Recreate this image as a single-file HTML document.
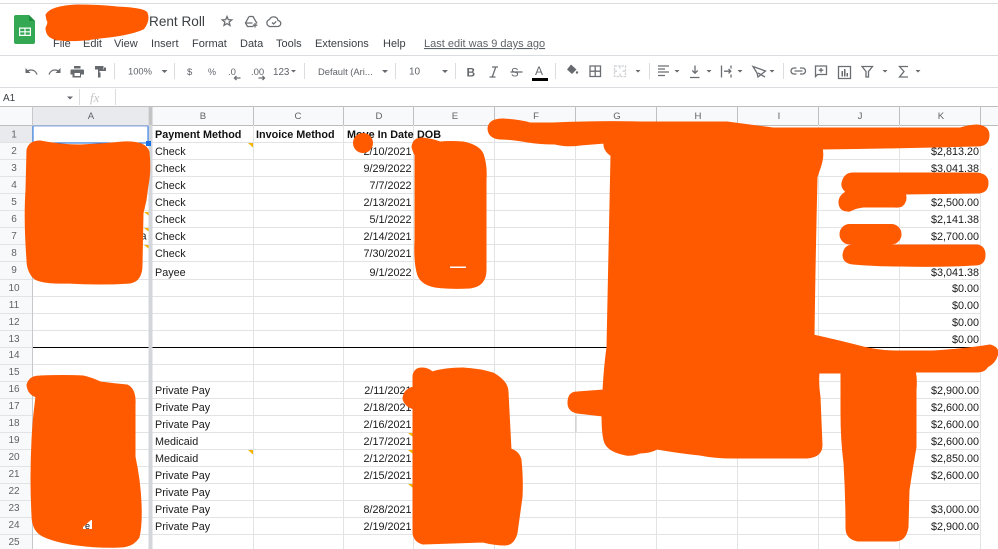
<!DOCTYPE html>
<html><head><meta charset="utf-8"><title>Rent Roll</title>
<style>
html,body{margin:0;padding:0;background:#fff;width:998px;height:549px;overflow:hidden}
svg{display:block;font-family:"Liberation Sans",Arial,sans-serif;filter:blur(.3px)}
.m{font-size:11px;fill:#3c4043}
.rn{font-size:10px;fill:#5f6368;text-anchor:middle}
.ch{font-size:9.6px;fill:#5f6368;text-anchor:middle}
.c{font-size:10.8px;fill:#1a1a1a}
.h{font-size:10.8px;font-weight:bold;fill:#111}
.r{font-size:10.8px;fill:#1a1a1a;text-anchor:end}
.t{font-size:10px;fill:#5f6368}
.i{fill:none;stroke:#6a6e72;stroke-width:1.3}
.f{fill:#666a6e;stroke:none}
.o{fill:#ff5a00;stroke:#ff5a00;stroke-width:3;stroke-linejoin:round}
</style></head><body>
<svg width="998" height="549" viewBox="0 0 998 549" xmlns="http://www.w3.org/2000/svg">
<rect width="998" height="549" fill="#fff"/>
<path d="M0 3.500H998M0 55.500H998M0 87.500H998" stroke="#dadce0" fill="none"/>

<!-- logo -->
<path d="M16 15H29L35 21V42Q35 44 33 44H16Q14 44 14 42V17Q14 15 16 15Z" fill="#34a853"/>
<path d="M29 15L35 21H29Z" fill="#1e8e3e"/>
<path d="M19 27.500H31V36H19Z M20.200 28.700V31.200H24.400V28.700Z M25.600 28.700V31.200H29.800V28.700Z M20.200 32.400V34.800H24.400V32.400Z M25.600 32.400V34.800H29.800V32.400Z" fill="#fff" fill-rule="evenodd"/>

<text x="149" y="26" font-size="13.600" fill="#3c4043">Rent Roll</text>
<path d="M227 16.500l1.300 3.100 3.500.3-2.700 2.200.9 3.300-3-1.800-3 1.800.9-3.300-2.700-2.200 3.500-.3z" class="i" stroke-width="1.100"/>
<path d="M249 16.500h4l4 7M249 16.500l-3.500 6.500 2 3.500h6M245.500 23h7" class="i" stroke-width="1.100"/>
<path d="M255 23v4.500M252.800 25.200h4.500" class="i" stroke-width="1.100"/>
<path d="M271.500 26.500h6a3 3 0 0 0 .5-6 4.500 4.500 0 0 0-8.500-1 3.600 3.600 0 0 0 2 7z" class="i" stroke-width="1.100"/>
<path d="M272 22.500l1.600 1.500 2.600-2.600" class="i" stroke-width="1"/>

<text class="m" x="53" y="47">File</text>
<text class="m" x="83" y="47">Edit</text>
<text class="m" x="114" y="47">View</text>
<text class="m" x="151" y="47">Insert</text>
<text class="m" x="192" y="47">Format</text>
<text class="m" x="240" y="47">Data</text>
<text class="m" x="276" y="47">Tools</text>
<text class="m" x="315" y="47">Extensions</text>
<text class="m" x="383" y="47">Help</text>
<text x="424" y="47" font-size="11" fill="#5f6368" text-decoration="underline">Last edit was 9 days ago</text>

<!-- toolbar -->
<path d="M114.500 63V79M174.500 63V79M304.500 63V79M395.500 63V79M455.500 63V79M555.500 63V79M649.500 63V79M783.500 63V79" stroke="#dadce0" fill="none"/>
<path d="M37 74.500c-1-3-3.500-4.500-6-4.500-1.500 0-3 .5-4 1.500" class="i"/><path d="M25.500 68v5h5z" class="f"/>
<path d="M49 74.500c1-3 3.500-4.500 6-4.500 1.500 0 3 .5 4 1.500" class="i"/><path d="M60.500 68v5h-5z" class="f"/>
<path d="M74 66h6.500v2.500H74z M71.500 69.500h11.500q1 0 1 1v4h-3v3h-8.500v-3h-2v-4q0-1 1-1z" class="f"/><rect x="74.500" y="73" width="5.500" height="3" fill="#fff"/>
<path d="M95 66h8.500v3.500H95z M104 67.500h2v3.500h-6.500v1.500h-1.500v-3h6z M98 72.500h2.500v5H98z" class="f"/>
<text class="t" x="128" y="74.500" font-size="9.400" style="font-size:9.400px">100%</text>
<path d="M161.500 70h6l-3 3zM291 70h5l-2.500 2.500zM382 70h6l-3 3zM442 70h6l-3 3zM635.500 70h5l-2.500 2.500zM674.500 70h5l-2.500 2.500zM706.500 70h5l-2.500 2.500zM737.500 70h5l-2.500 2.500zM769.500 70h5l-2.500 2.500zM882.500 70h5l-2.500 2.500zM915.500 70h5l-2.500 2.500z" class="f"/>
<text class="t" x="187" y="75" style="font-size:9.500px">$</text>
<text class="t" x="208" y="75" style="font-size:9px">%</text>
<text class="t" x="228" y="75" style="font-size:9.500px">.0</text>
<path d="M234.500 78h6M236.500 76l-2 2 2 2" class="i" stroke-width="1"/>
<text class="t" x="251" y="75" style="font-size:9.500px">.00</text>
<path d="M258.500 78h6M262.500 76l2 2-2 2" class="i" stroke-width="1"/>
<text class="t" x="273" y="75" style="font-size:9.800px">123</text>
<text class="t" x="318" y="75" style="font-size:9.400px">Default (Ari...</text>
<text class="t" x="409" y="74.500">10</text>
<text x="466.500" y="76.500" font-size="12" font-weight="bold" fill="#666a6e">B</text>
<path d="M492 67h6M489.500 77h6M495.800 67l-3.600 10" class="i" stroke-width="1.500"/>
<text x="511" y="76.500" font-size="11.500" fill="#666a6e">S</text><path d="M510.500 72h12" class="i" stroke-width="1.100"/>
<text x="535" y="75" font-size="12" fill="#666a6e">A</text>
<rect x="532" y="78" width="16" height="3" fill="#000"/>
<path d="M571 64.500l5.500 5-4.500 4.500-5-4.500z" class="f"/><circle cx="577" cy="72.500" r="1.200" fill="#666a6e"/>
<path d="M590 66h10.500v10.500H590zM595.200 66v10.500M590 71.200h10.500" class="i"/>
<path d="M614.500 66h11v10.500h-11zM620 66v3M620 73.500v3M614.500 71.200h3M622.500 71.200h3" fill="none" stroke="#d0d2d5" stroke-width="1.300" stroke-dasharray="2.500 1"/>
<path d="M658 66h11M658 69h7M658 72h11M658 75.500h7" class="i" stroke-width="1.100"/>
<path d="M690 77.500h9.500M695 65.500v7.500M692.300 70.500l2.700 2.700 2.700-2.700" class="i" stroke-width="1.100"/>
<path d="M721.500 65.500v12M731 65.500v3M731 74.500v3M724 71.200h6.500M728.500 69l2.200 2.200-2.200 2.200" class="i" stroke-width="1.100"/>
<path d="M753 66.500l12.500 4.500-7.500 6-1-4-4-6.500zM758 73l7 4" class="i" stroke-width="1.100"/>
<path d="M796.500 68h-2.500a3 3 0 0 0 0 6h2.500M800 68h2.500a3 3 0 0 1 0 6H800M794.500 71h8" class="i" stroke-width="1.200"/>
<path d="M815.500 66h11v8.500h-9l-2 2zM821 68v4.500M818.700 70.200h4.600" class="i" stroke-width="1.100"/>
<path d="M838.500 66.500h12v12h-12z" class="i" stroke-width="1.200"/><path d="M841.500 71h1.500v5.500h-1.500zM844 69h1.500v7.500H844zM846.500 73h1.500v3.500h-1.500z" class="f"/>
<path d="M862 66.500h10.500l-4 5v5.500h-2.500v-5.500z" class="i" stroke-width="1.100"/>
<path d="M908 66.500h-8.500l4.500 5-4.500 5.500h8.500" class="i" stroke-width="1.200"/>

<!-- name box -->
<text x="3" y="101" font-size="10" fill="#3c4043">A1</text>
<path d="M67 96.500h6l-3 3z" class="f"/>
<path d="M79.500 89V105M115.500 89V105" stroke="#dadce0" fill="none"/>
<text x="90" y="102" font-size="13" font-family="Liberation Serif" font-style="italic" fill="#c4c7c5">fx</text>

<!-- headers -->
<rect x="0" y="106" width="998" height="19.500" fill="#f8f9fa"/>
<rect x="0" y="125" width="32.500" height="424" fill="#f8f9fa"/>
<rect x="33" y="107" width="115" height="18.500" fill="#e8eaed"/>
<rect x="0" y="126" width="32" height="16.500" fill="#e8eaed"/>
<path d="M0 106.500H998M0 125.500H998" stroke="#bdbdbd" fill="none"/>
<path d="M32.500 106V125M253.500 106V125M343.500 106V125M413.500 106V125M494.500 106V125M575.500 106V125M656.500 106V125M737.500 106V125M818.500 106V125M899.500 106V125M980.500 106V125" stroke="#c0c0c0" fill="none"/>
<text class="ch" x="91" y="119">A</text>
<text class="ch" x="203" y="119">B</text>
<text class="ch" x="298" y="119">C</text>
<text class="ch" x="379" y="119">D</text>
<text class="ch" x="455" y="119">E</text>
<text class="ch" x="536" y="119">F</text>
<text class="ch" x="617" y="119">G</text>
<text class="ch" x="698" y="119">H</text>
<text class="ch" x="779" y="119">I</text>
<text class="ch" x="860" y="119">J</text>
<text class="ch" x="941" y="119">K</text>

<!-- grid -->
<path d="M253.500 125V549M343.500 125V549M413.500 125V549M494.500 125V549M575.500 125V549M656.500 125V549M737.500 125V549M818.500 125V549M899.500 125V549M980.500 125V549" stroke="#e2e3e5" fill="none"/>
<path d="M0 142.500H980M0 159.500H980M0 176.500H980M0 193.500H980M0 210.500H980M0 227.500H980M0 244.500H980M0 261.500H980M0 279.500H980M0 296.500H980M0 313.500H980M0 330.500H980M0 364.500H980M0 381.500H980M0 398.500H980M0 415.500H980M0 432.500H980M0 449.500H980M0 466.500H980M0 483.500H980M0 500.500H980M0 517.500H980M0 534.500H980" stroke="#e2e3e5" fill="none"/>
<path d="M0 347.500H33" stroke="#e2e3e5" fill="none"/>
<path d="M33 347.500H980" stroke="#000" fill="none"/>
<path d="M32.500 106V549" stroke="#c6c8cb" fill="none"/>
<path d="M576 415.500V432.500" stroke="#c4c4c4" fill="none"/>
<rect x="148.500" y="125" width="4" height="424" fill="#d3d6db"/>
<rect x="148.500" y="107" width="4" height="18" fill="#c2c4c6"/>

<!-- row numbers -->
<text class="rn" x="14" y="137.500">1</text>
<text class="rn" x="14" y="154">2</text>
<text class="rn" x="14" y="171">3</text>
<text class="rn" x="14" y="188">4</text>
<text class="rn" x="14" y="205">5</text>
<text class="rn" x="14" y="222">6</text>
<text class="rn" x="14" y="239">7</text>
<text class="rn" x="14" y="256">8</text>
<text class="rn" x="14" y="273">9</text>
<text class="rn" x="14" y="291">10</text>
<text class="rn" x="14" y="308">11</text>
<text class="rn" x="14" y="325">12</text>
<text class="rn" x="14" y="342">13</text>
<text class="rn" x="14" y="358">14</text>
<text class="rn" x="14" y="375">15</text>
<text class="rn" x="14" y="392">16</text>
<text class="rn" x="14" y="409">17</text>
<text class="rn" x="14" y="426">18</text>
<text class="rn" x="14" y="443">19</text>
<text class="rn" x="14" y="460">20</text>
<text class="rn" x="14" y="477">21</text>
<text class="rn" x="14" y="494">22</text>
<text class="rn" x="14" y="511">23</text>
<text class="rn" x="14" y="528">24</text>
<text class="rn" x="14" y="545">25</text>

<!-- selection -->
<path d="M33 126V143H148V126" fill="none" stroke="#1a73e8"/>
<path d="M33 126H148" fill="none" stroke="#7fa8e8"/>
<rect x="146" y="141" width="5" height="5" fill="#1a73e8"/>

<!-- notes -->
<path d="M248 143h5v4.500zM144 212h4.500v3.500zM144 228h4.500v3.500zM144 245h4.500v3.500zM248 450h5v4.500zM408 433h5v4zM408 450h5v4zM408 484h5v4z" fill="#f4b400"/>
<text class="c" x="140.500" y="239.500">a</text>

<!-- cells -->
<text class="h" x="155" y="138">Payment Method</text>
<text class="h" x="256" y="138">Invoice Method</text>
<text class="h" x="347" y="138">Move In Date</text>
<text class="h" x="417" y="138">DOB</text>

<text class="c" x="155" y="155">Check</text>
<text class="c" x="155" y="172">Check</text>
<text class="c" x="155" y="189">Check</text>
<text class="c" x="155" y="206">Check</text>
<text class="c" x="155" y="223">Check</text>
<text class="c" x="155" y="240">Check</text>
<text class="c" x="155" y="257">Check</text>
<text class="c" x="155" y="276">Payee</text>
<text class="c" x="155" y="394">Private Pay</text>
<text class="c" x="155" y="411">Private Pay</text>
<text class="c" x="155" y="428">Private Pay</text>
<text class="c" x="155" y="445">Medicaid</text>
<text class="c" x="155" y="462">Medicaid</text>
<text class="c" x="155" y="479">Private Pay</text>
<text class="c" x="155" y="496">Private Pay</text>
<text class="c" x="155" y="513">Private Pay</text>
<text class="c" x="155" y="530">Private Pay</text>

<text class="r" x="411.500" y="155">2/10/2021</text>
<text class="r" x="411.500" y="172">9/29/2022</text>
<text class="r" x="411.500" y="189">7/7/2022</text>
<text class="r" x="411.500" y="206">2/13/2021</text>
<text class="r" x="411.500" y="223">5/1/2022</text>
<text class="r" x="411.500" y="240">2/14/2021</text>
<text class="r" x="411.500" y="257">7/30/2021</text>
<text class="r" x="411.500" y="276">9/1/2022</text>
<text class="r" x="411.500" y="394">2/11/2021</text>
<text class="r" x="411.500" y="411">2/18/2021</text>
<text class="r" x="411.500" y="428">2/16/2021</text>
<text class="r" x="411.500" y="445">2/17/2021</text>
<text class="r" x="411.500" y="462">2/12/2021</text>
<text class="r" x="411.500" y="479">2/15/2021</text>
<text class="r" x="411.500" y="513">8/28/2021</text>
<text class="r" x="411.500" y="530">2/19/2021</text>

<text class="r" x="979" y="155">$2,813.20</text>
<text class="r" x="979" y="172">$3,041.38</text>
<text class="r" x="979" y="206">$2,500.00</text>
<text class="r" x="979" y="223">$2,141.38</text>
<text class="r" x="979" y="240">$2,700.00</text>
<text class="r" x="979" y="276">$3,041.38</text>
<text class="r" x="979" y="292">$0.00</text>
<text class="r" x="979" y="309">$0.00</text>
<text class="r" x="979" y="326">$0.00</text>
<text class="r" x="979" y="343">$0.00</text>
<text class="r" x="979" y="394">$2,900.00</text>
<text class="r" x="979" y="411">$2,600.00</text>
<text class="r" x="979" y="428">$2,600.00</text>
<text class="r" x="979" y="445">$2,600.00</text>
<text class="r" x="979" y="462">$2,850.00</text>
<text class="r" x="979" y="479">$2,600.00</text>
<text class="r" x="979" y="513">$3,000.00</text>
<text class="r" x="979" y="530">$2,900.00</text>

<!-- redaction scribbles -->
<path class="o" d="M47 15Q52 7 77 6Q100 6 117 8Q142 9 146 13Q149 20 143 28Q130 34 100 37Q75 41 60 39Q47 38 47 28Q50 22 48 20Z"/>
<path class="o" d="M28 150Q30 142 40 142Q60 146 80 146Q105 145 123 143Q145 142 148 152Q150 170 147 185L145 200L142 213L141 265Q141 280 130 282Q100 284 67 282Q40 283 34 277Q28 270 28 260Q25 220 27 190Z"/>
<path class="o" d="M28 385Q30 377 40 377Q65 376 83 377Q92 379 100 383Q115 385 127 386Q135 390 134 405V457Q139 480 140 503Q141 525 138 537Q132 546 120 546Q100 547 77 544Q55 541 43 535Q33 530 33 515Q31 480 33 440Q34 420 36 405L37 396Q29 394 28 385Z"/>
<rect x="83" y="520" width="9" height="9" fill="#fff"/>
<path d="M83 520H91L83 527Z" fill="#ff5a00"/>
<text x="85" y="529" font-size="9" fill="#111">e</text>
<circle cx="363" cy="143" r="10" fill="#ff5a00"/>
<path class="o" d="M413 147Q414 139 422 139Q432 140 440 143Q450 142 463 143Q478 146 482 154Q486 165 485 180V270Q485 285 470 287Q450 288 435 286Q420 283 418 272Q415 260 416 240V155Q414 151 413 147Z"/>
<rect x="450" y="266.500" width="16" height="1.500" fill="#fff"/>
<path class="o" d="M489 128Q490 120 503 120Q520 121 530 124Q545 124 553 124Q600 122 640 123H727Q750 126 773 129H960Q970 126 977 126Q988 127 988 135Q988 145 977 145Q900 147 821 148Q823 155 820 165L816 177Q814 260 813 336Q840 342 863 348Q880 352 895 352H933Q965 350 990 346Q997 348 997 353Q995 362 987 366Q984 371 978 371H914Q916 378 915 390L915 447Q911 470 908 490L907 527Q905 540 895 540H858Q847 538 847 528Q847 495 845 463Q842 440 842 413V372H818Q817 385 819 397Q820 420 821 445Q821 456 807 457H733Q715 457 700 454Q680 452 657 448Q650 452 640 452Q632 455 626 454Q610 451 606 443Q603 436 603 415L577 412Q569 410 569 403Q569 393 577 393L604 391Q605 370 608 347Q610 250 612 155Q604 150 605 142L580 144Q568 146 555 143Q540 143 528 141Q510 138 500 138Q489 137 489 128Z"/>
<path class="o" d="M843 183Q845 174 853 174H977Q987 175 987 183Q987 192 977 192L904 193Q906 198 904 202Q902 207 895 206H863Q855 207 850 210Q840 211 840 202Q840 196 848 192Q842 188 843 183Z"/>
<rect x="841" y="225.500" width="59" height="17.500" rx="8.700" class="o"/>
<path class="o" d="M844 255Q845 246 853 246H977Q984 247 984 255Q984 264 975 264Q940 266 900 265Q875 265 853 263Q844 262 844 255Z"/>
<path class="o" d="M404 398Q405 390 414 388V376Q415 369 422 369Q428 369 432 373Q445 369 463 369Q480 370 493 374Q507 382 507 392L510 450Q518 452 520 460Q522 480 521 497L516 533Q513 544 505 544Q495 544 483 541L423 543Q415 541 414 533V408Q405 405 404 398Z"/>
</svg>
</body></html>
